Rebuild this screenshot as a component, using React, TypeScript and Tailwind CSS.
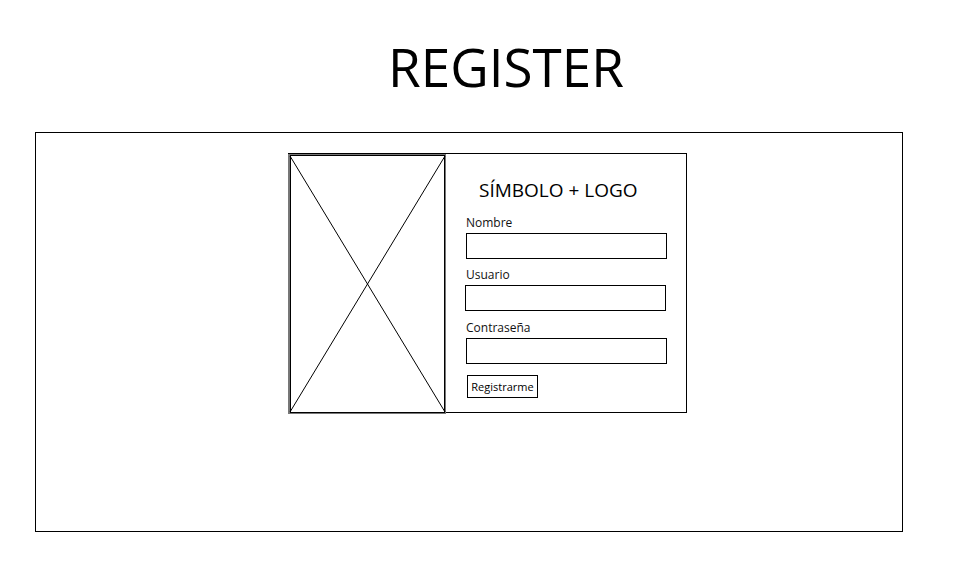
import { useState } from "react";

const Field = ({ label, shift = 0, extra = "" }: { label: string; shift?: number; extra?: string }) => {
  const [value, setValue] = useState("");
  return (
    <div className={`flex flex-col ${extra}`}>
      <label className="text-[12px] leading-[16px] text-[#111]">{label}</label>
      <input
        value={value}
        onChange={(e) => setValue(e.target.value)}
        className={`mt-[2px] h-[26px] w-[201px] border border-black bg-white px-1 text-[12px] outline-none ${shift ? "-ml-px" : ""}`}
      />
    </div>
  );
};

const Placeholder = () => (
  <svg width="158" height="260" viewBox="0 0 158 260" className="shrink-0">
    <rect x="1" y="1" width="156" height="258" fill="white" stroke="#777" strokeWidth="2" />
    <rect x="2.5" y="1.5" width="154" height="257" fill="none" stroke="#000" strokeWidth="1" />
    <line x1="2" y1="2" x2="157" y2="258" stroke="#000" strokeWidth="1" />
    <line x1="157" y1="2" x2="2" y2="258" stroke="#000" strokeWidth="1" />
  </svg>
);

const App = () => {
  return (
    <div className="min-h-[575px] w-[957px] bg-white font-['Open_Sans',sans-serif] text-black">
      <h1 className="pl-[55px] pt-[31px] text-center text-[53px] leading-[72px] font-normal">REGISTER</h1>

      <div className="ml-[35px] mt-[29px] h-[400px] w-[868px] border border-black pl-[252px] pt-[20px]">
        <div className="flex h-[260px] w-[399px] border-y border-r border-black">
          <Placeholder />
          <div className="flex flex-1 flex-col pl-[20px]">
            <h2 className="mt-[24px] pl-[13px] text-[19px] leading-[24px]">SÍMBOLO + LOGO</h2>
            <div className="mt-[13px] flex flex-col gap-[8px]">
              <Field label="Nombre" />
              <Field label="Usuario" shift={1} />
              <Field label="Contraseña" extra="mt-px" />
            </div>
            <button className="mt-[11px] ml-px h-[23px] w-[71px] border border-black bg-white text-[11px] leading-[21px]">
              Registrarme
            </button>
          </div>
        </div>
      </div>
    </div>
  );
};

export default App;
